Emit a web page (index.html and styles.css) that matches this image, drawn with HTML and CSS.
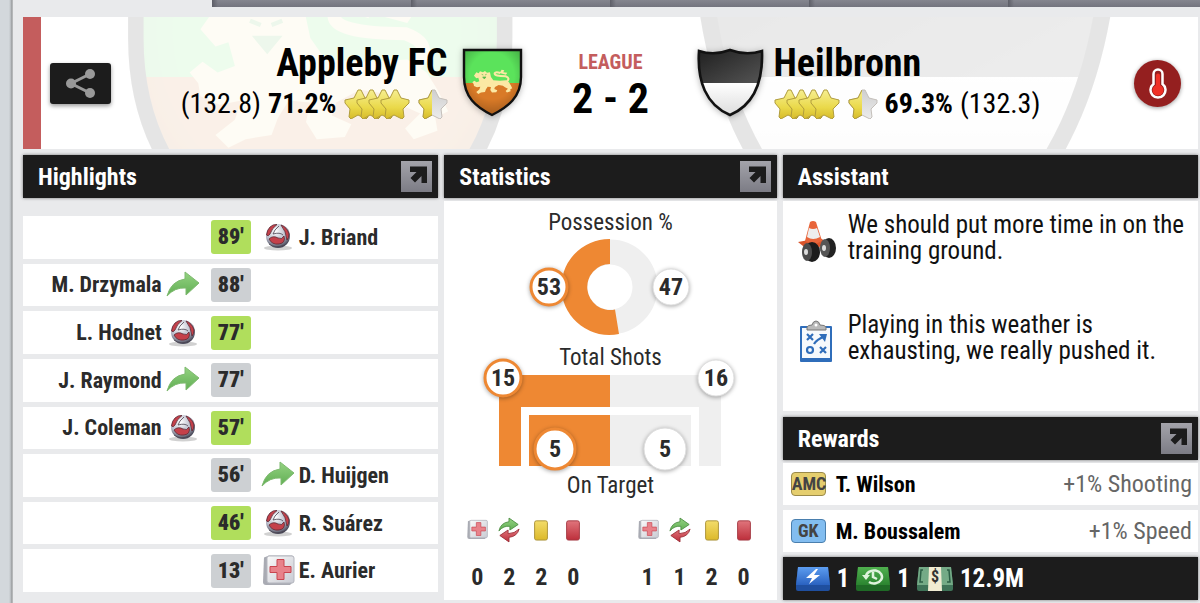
FILE: index.html
```html
<!DOCTYPE html>
<html lang="en">
<head>
  <meta charset="UTF-8">
  <title>Match Report</title>
  <link rel="stylesheet" href="styles.css">
</head>
<body>
  <!-- shared icons -->
  <svg class="defs" width="0" height="0" aria-hidden="true">
    <defs>
      <linearGradient id="g-gold" x1="0" y1="0" x2="0" y2="1"><stop offset="0" stop-color="#f6ee90"/><stop offset=".6" stop-color="#ead94a"/><stop offset="1" stop-color="#d6ba2a"/></linearGradient>
      <linearGradient id="g-silver" x1="0" y1="0" x2="0" y2="1"><stop offset="0" stop-color="#cfcfcf"/><stop offset="1" stop-color="#ececec"/></linearGradient>
      <linearGradient id="g-green" x1="0" y1="0" x2="0" y2="1"><stop offset="0" stop-color="#94d381"/><stop offset="1" stop-color="#60ad53"/></linearGradient>
      <linearGradient id="g-red" x1="0" y1="0" x2="0" y2="1"><stop offset="0" stop-color="#e0757c"/><stop offset="1" stop-color="#bd2f3b"/></linearGradient>
      <linearGradient id="g-yellow" x1="0" y1="0" x2="0" y2="1"><stop offset="0" stop-color="#f3dc6a"/><stop offset="1" stop-color="#dcb92a"/></linearGradient>
      <linearGradient id="g-kit" x1="0" y1="0" x2="1" y2="1"><stop offset="0" stop-color="#fafafa"/><stop offset="1" stop-color="#c9cbd3"/></linearGradient>
      <linearGradient id="g-black" x1="0" y1="0" x2="1" y2="1"><stop offset="0" stop-color="#1c1c1c"/><stop offset="1" stop-color="#555"/></linearGradient>
      <linearGradient id="g-white" x1="0" y1="0" x2="0" y2="1"><stop offset="0" stop-color="#fff"/><stop offset="1" stop-color="#d8d8d8"/></linearGradient>
      <linearGradient id="g-blue" x1="0" y1="0" x2="0" y2="1"><stop offset="0" stop-color="#5c9df0"/><stop offset="1" stop-color="#2a62c0"/></linearGradient>
      <linearGradient id="g-cash" x1="0" y1="0" x2="0" y2="1"><stop offset="0" stop-color="#4fb04e"/><stop offset="1" stop-color="#2b8430"/></linearGradient>
      <radialGradient id="g-shade" cx=".5" cy=".4" r=".65"><stop offset=".5" stop-color="#000" stop-opacity="0"/><stop offset="1" stop-color="#000" stop-opacity=".35"/></radialGradient>
      <radialGradient id="g-ball" cx=".4" cy=".3" r=".7"><stop offset="0" stop-color="#fff"/><stop offset=".6" stop-color="#b9bccb"/><stop offset="1" stop-color="#464656"/></radialGradient>
      <clipPath id="c-home"><path d="M6 3H63V30C63 50 50 60 34 68C18 60 6 50 6 30Z"/></clipPath>
      <clipPath id="c-away"><path d="M3 4Q18 9 34 3Q50 9 66 4C67 34 58 58 34 68C10 58 1 34 3 4Z"/></clipPath>
      <clipPath id="c-left"><rect width="14" height="30"/></clipPath>
    </defs>

    <symbol id="crest-home" viewBox="0 0 68 72">
      <g clip-path="url(#c-home)">
        <rect width="68" height="36" fill="#5be35b"/>
        <rect y="36" width="68" height="36" fill="#d97a27"/>
        <g transform="scale(.333) translate(-9 -18)">
          <path d="M57 104l7-10 7 3 4-6 9 3 6-4 6 5 9-1 3 14 7 10 20 1 18-1 9 6 5 8 5 10-6 3 1 6-11 4-4-5 7-7-9-4-6-5-13-2-11 6-2 6 9 4-3 6-13 1-5-8 2-9-10-1-5 8-3 8-12 2-8 4-6-6 9-7 3-9-10 2-9-4-1-6-4-5 6-5 7 5 8-3-3-11-6 2z" fill="#fbe9a4"/>
          <path d="M154 123Q168 112 152 106Q118 106 119 97Q122 91 136 96" fill="none" stroke="#fbe9a4" stroke-width="6"/>
          <path d="M134 96l6-10 8 2-3 6 12 1-4 6z" fill="#fbe9a4"/>
          <path d="M80 100l5 2M95 100l-5 2M83 108h10l-5 6z" stroke="#58b94c" stroke-width="2" fill="#58b94c"/>
        </g>
        <rect width="68" height="72" fill="url(#g-shade)"/>
      </g>
      <path d="M6 3H63V30C63 50 50 60 34 68C18 60 6 50 6 30Z" fill="none" stroke="#111" stroke-width="2.4"/>
    </symbol>

    <symbol id="crest-away" viewBox="0 0 68 72">
      <g clip-path="url(#c-away)">
        <rect width="68" height="36" fill="url(#g-black)"/>
        <rect y="36" width="68" height="36" fill="url(#g-white)"/>
      </g>
      <path d="M3 4Q18 9 34 3Q50 9 66 4C67 34 58 58 34 68C10 58 1 34 3 4Z" fill="none" stroke="#111" stroke-width="2.6"/>
    </symbol>

    <symbol id="star" viewBox="0 0 30 30">
      <path d="M14 1h3l4 8 8 2v3l-6 6 1 8-2 2-8-4-7 4-2-2 1-8-5-6v-3l9-2z" fill="url(#g-gold)" stroke="#b09c3c" stroke-linejoin="round"/>
    </symbol>
    <symbol id="half-star" viewBox="0 0 30 30">
      <path d="M14 1h3l4 8 8 2v3l-6 6 1 8-2 2-8-4-7 4-2-2 1-8-5-6v-3l9-2z" fill="url(#g-silver)" stroke="#c4bfba" stroke-linejoin="round"/>
      <path clip-path="url(#c-left)" d="M14 1h3l4 8 8 2v3l-6 6 1 8-2 2-8-4-7 4-2-2 1-8-5-6v-3l9-2z" fill="url(#g-gold)" stroke="#b09c3c" stroke-linejoin="round"/>
    </symbol>

    <symbol id="ball" viewBox="0 0 34 34">
      <ellipse cx="17" cy="28" rx="14" ry="2.500" fill="#000" opacity=".18"/>
      <circle cx="17" cy="16" r="12" fill="url(#g-ball)"/>
      <path d="M9 7Q12 4 16 4.500Q11 8 9 14Q7 17 5.500 15Q6 10 9 7zM20 5Q26 7 28 14Q28 18 26 20Q25 11 20 5zM8 19Q12 15 17 18Q21 20 23 16Q25 23 18 24Q11 25 8 19z" fill="#c4404a" stroke="#5a2833" stroke-width=".8"/>
      <path d="M18 6Q13 10 12 14Q19 12 22 15M8 24Q14 29 24 25" fill="none" stroke="#4a4450" stroke-width=".8"/>
    </symbol>

    <symbol id="sub" viewBox="0 0 34 34">
      <path d="M1 28Q5 13 19 11V4L33 15L20 27V20Q9 19 1 28Z" fill="url(#g-green)" stroke="#7fba70"/>
    </symbol>

    <symbol id="medkit" viewBox="0 0 34 34">
      <path d="M3 3.500L8 1.500H31Q33 2 33 4V27L29 31H5Q2 31 2 28Z" fill="#a9abb3"/>
      <rect x="6" y="2" width="27" height="27" rx="2" fill="url(#g-kit)" stroke="#b5b7bf"/>
      <path d="M16 5.500h7v7h7v6h-7v7h-7v-7h-7v-6h7z" fill="#e8828a" stroke="#c9444f"/>
    </symbol>

    <symbol id="swap" viewBox="0 0 24 28">
      <path d="M1 15Q3 6 12 5V1L22 8L13 14V10Q6 9 1 15Z" fill="url(#g-green)" stroke="#4f8f45"/>
      <path d="M23 13Q21 21 12 22V27L2 20L11 14V18Q18 18 23 13Z" fill="url(#g-red)" stroke="#9c3039"/>
    </symbol>

    <symbol id="yellow-card" viewBox="0 0 24 28">
      <rect x="5" y="4" width="14" height="21" rx="2" fill="url(#g-yellow)" stroke="#a98f34"/>
    </symbol>
    <symbol id="red-card" viewBox="0 0 24 28">
      <rect x="5" y="4" width="14" height="21" rx="2" fill="url(#g-red)" stroke="#a33842"/>
    </symbol>

    <symbol id="open" viewBox="0 0 31 31">
      <path d="M9 5.500H26V22H20.500V15L14 21.500L9.500 17L15.500 11H9Z" fill="#1c1c1c"/>
    </symbol>
  </svg>

  <div class="edge"></div>
  <main class="page">
    <div class="tabs"><span></span><span></span><span></span><span></span><span></span></div>

    <header class="match">
      <svg class="ghost ghost-home" viewBox="0 0 68 72"><use href="#crest-home"/></svg>
      <svg class="ghost ghost-away" viewBox="0 0 68 72"><use href="#crest-away"/></svg>

      <div class="side home">
        <div class="bar"></div>
        <button class="share" aria-label="Share">
          <svg width="31" height="29" viewBox="0 0 31 29">
            <path d="M25 5L6 14.500L25 24" fill="none" stroke="#999" stroke-width="3"/>
            <circle cx="25" cy="5" r="5" fill="#999"/><circle cx="6" cy="14.500" r="5" fill="#999"/><circle cx="25" cy="24" r="5" fill="#999"/>
          </svg>
        </button>
        <div class="team">
          <h1>Appleby FC</h1>
          <div class="rating">
            <span>(132.8)</span> <b>71.2%</b>
            <span class="stars">
              <svg><use href="#star"/></svg><svg><use href="#star"/></svg><svg><use href="#star"/></svg><svg><use href="#star"/></svg><svg class="half"><use href="#half-star"/></svg>
            </span>
          </div>
        </div>
        <svg class="crest"><use href="#crest-home"/></svg>
      </div>

      <div class="score">
        <div class="competition">LEAGUE</div>
        <div class="result">2 - 2</div>
      </div>

      <div class="side away">
        <svg class="crest"><use href="#crest-away"/></svg>
        <div class="team">
          <h1>Heilbronn</h1>
          <div class="rating">
            <span class="stars">
              <svg><use href="#star"/></svg><svg><use href="#star"/></svg><svg><use href="#star"/></svg><svg><use href="#star"/></svg><svg class="half"><use href="#half-star"/></svg>
            </span>
            <b>69.3%</b> <span>(132.3)</span>
          </div>
        </div>
        <button class="weather" aria-label="Weather">
          <svg width="18" height="31" viewBox="0 0 18 31">
            <path d="M4.500 6a4.500 4.500 0 0 1 9 0V16a7.500 7.500 0 1 1-9 0Z" fill="#941f1f" stroke="#fff" stroke-width="2.500"/>
            <path d="M7 7.500a2 2 0 0 1 4 0V17a5.500 5.500 0 1 1-4 0Z" fill="#f03127"/>
          </svg>
        </button>
      </div>
    </header>

    <div class="columns">
      <section class="panel">
        <div class="panel-head">
          <h2>Highlights</h2>
          <button class="open" aria-label="Open highlights"><svg><use href="#open"/></svg></button>
        </div>
        <ul class="events">
          <li><span class="ev-home"></span><b class="minute goal">89'</b><span class="ev-away"><svg><use href="#ball"/></svg>J. Briand</span></li>
          <li><span class="ev-home">M. Drzymala<svg><use href="#sub"/></svg></span><b class="minute">88'</b><span class="ev-away"></span></li>
          <li><span class="ev-home">L. Hodnet<svg><use href="#ball"/></svg></span><b class="minute goal">77'</b><span class="ev-away"></span></li>
          <li><span class="ev-home">J. Raymond<svg><use href="#sub"/></svg></span><b class="minute">77'</b><span class="ev-away"></span></li>
          <li><span class="ev-home">J. Coleman<svg><use href="#ball"/></svg></span><b class="minute goal">57'</b><span class="ev-away"></span></li>
          <li><span class="ev-home"></span><b class="minute">56'</b><span class="ev-away"><svg><use href="#sub"/></svg>D. Huijgen</span></li>
          <li><span class="ev-home"></span><b class="minute goal">46'</b><span class="ev-away"><svg><use href="#ball"/></svg>R. Suárez</span></li>
          <li><span class="ev-home"></span><b class="minute">13'</b><span class="ev-away"><svg><use href="#medkit"/></svg>E. Aurier</span></li>
        </ul>
      </section>

      <section class="panel">
        <div class="panel-head">
          <h2>Statistics</h2>
          <button class="open" aria-label="Open statistics"><svg><use href="#open"/></svg></button>
        </div>
        <div class="stats">
          <h3>Possession %</h3>
          <svg class="chart" width="222" height="100" viewBox="0 0 222 100">
            <circle cx="111" cy="51" r="35" fill="none" stroke="#efefef" stroke-width="25"/>
            <path d="M111 3A48 48 0 1 0 120 98L116 73.500A23 23 0 1 1 111 28Z" fill="#ee8833"/>
            <g class="bubble home-bubble"><circle cx="50" cy="51" r="18"/><text x="50" y="59">53</text></g>
            <g class="bubble"><circle cx="172" cy="51" r="18"/><text x="172" y="59">47</text></g>
          </svg>
          <h3>Total Shots</h3>
          <svg class="chart shots" width="222" height="98" viewBox="0 0 222 98">
            <path d="M0 0H111V32H22V91H0ZM30 40H111V91H30Z" fill="#ee8833"/>
            <path d="M111 0H222V91H200V32H111ZM111 40H192V91H111Z" fill="#efefef"/>
            <g class="bubble home-bubble"><circle cx="4" cy="3" r="18"/><text x="4" y="11">15</text></g>
            <g class="bubble"><circle cx="217" cy="3" r="18"/><text x="217" y="11">16</text></g>
            <g class="bubble home-bubble"><circle cx="56" cy="74" r="20"/><text x="56" y="82">5</text></g>
            <g class="bubble"><circle cx="166" cy="74" r="21"/><text x="166" y="82">5</text></g>
          </svg>
          <h3>On Target</h3>
          <div class="counts">
            <ul>
              <li><svg><use href="#medkit"/></svg>0</li>
              <li><svg><use href="#swap"/></svg>2</li>
              <li><svg><use href="#yellow-card"/></svg>2</li>
              <li><svg><use href="#red-card"/></svg>0</li>
            </ul>
            <ul>
              <li><svg><use href="#medkit"/></svg>1</li>
              <li><svg><use href="#swap"/></svg>1</li>
              <li><svg><use href="#yellow-card"/></svg>2</li>
              <li><svg><use href="#red-card"/></svg>0</li>
            </ul>
          </div>
        </div>
      </section>

      <div class="stack">
        <section class="panel assistant">
          <div class="panel-head"><h2>Assistant</h2></div>
          <div class="advice">
            <div class="tip">
              <svg width="38" height="44" viewBox="0 0 38 44">
                <path d="M0 22L22 18L32 24L10 30Z" fill="#d9542b"/>
                <path d="M12 2Q15 0 18 2L24 21Q15 26 7 21Z" fill="#e8653a"/>
                <path d="M11 8Q15 10 19 8L22 17Q15 21 9 17Z" fill="#eee"/>
                <path d="M10 31L33 27" stroke="#999" stroke-width="4"/>
                <ellipse cx="31" cy="28" rx="7" ry="10" fill="#222"/><ellipse cx="27" cy="28" rx="5" ry="9" fill="#555"/><ellipse cx="26" cy="28" rx="2" ry="3" fill="#ddd"/>
                <ellipse cx="14" cy="32" rx="8" ry="10" fill="#1c1c1c"/><ellipse cx="9" cy="32" rx="5" ry="9" fill="#4c4c4c"/><ellipse cx="8" cy="32" rx="2" ry="3" fill="#ddd"/>
              </svg>
              <p>We should put more time in on the training ground.</p>
            </div>
            <div class="tip">
              <svg width="38" height="44" viewBox="0 0 38 44">
                <rect x="2" y="6" width="32" height="36" rx="1" fill="#2f6dba"/>
                <rect x="4" y="8" width="28" height="30" fill="#f6f9fc"/>
                <path d="M9 10V7Q10 5 14 5Q15 1 18 1Q21 1 22 5Q27 5 28 7V10Z" fill="#b9b9b9" stroke="#777"/>
                <circle cx="18" cy="5" r="1.500" fill="#fff"/>
                <path d="M9 14l6 6M15 14l-6 6M22 27l6 6M28 27l-6 6M16 24Q18 20 27 16" stroke="#2f6dba" stroke-width="2.200" fill="none"/>
                <path d="M21 14L29 14L27 22Z" fill="#2f6dba"/>
                <circle cx="12" cy="30" r="3" fill="none" stroke="#2f6dba" stroke-width="2.200"/>
              </svg>
              <p>Playing in this weather is exhausting, we really pushed it.</p>
            </div>
          </div>
        </section>

        <section class="panel">
          <div class="panel-head">
            <h2>Rewards</h2>
            <button class="open" aria-label="Open rewards"><svg><use href="#open"/></svg></button>
          </div>
          <ul class="rewards">
            <li><span class="position amc">AMC</span><b>T. Wilson</b><span class="bonus">+1% Shooting</span></li>
            <li><span class="position gk">GK</span><b>M. Boussalem</b><span class="bonus">+1% Speed</span></li>
          </ul>
          <div class="totals">
            <svg width="36" height="26" viewBox="0 0 36 26">
              <path d="M3 1H33L35 19V23Q35 25 33 25H3Q1 25 1 23V19Z" fill="#1f4f9f"/>
              <path d="M3 1H33L35 19H1Z" fill="url(#g-blue)"/>
              <path d="M21 3L11 12H17L14 18L25 9H19L23 3Z" fill="#fff"/>
            </svg>
            <span>1</span>
            <svg width="36" height="26" viewBox="0 0 36 26">
              <path d="M3 1H33L35 19V23Q35 25 33 25H3Q1 25 1 23V19Z" fill="#1f6a26"/>
              <path d="M3 1H33L35 19H1Z" fill="url(#g-cash)"/>
              <path d="M11 11A8 6.500 0 1 1 14 16M18 6V11L22 13" fill="none" stroke="#dff3dd" stroke-width="2.500"/>
              <path d="M7 9L15 9L11 14Z" fill="#dff3dd"/>
            </svg>
            <span>1</span>
            <svg width="38" height="26" viewBox="0 0 38 26">
              <path d="M3 1H35L37 19V23Q37 25 35 25H3Q1 25 1 23V19Z" fill="#3f7358"/>
              <path d="M3 1H35L37 19H1Z" fill="#74aa86"/>
              <path d="M7 4H5L4 16H7M31 4H33L34 16H31" fill="none" stroke="#2c5f45" stroke-width="1.500"/>
              <path d="M13 1H25L26 25H12Z" fill="#f0ecd2"/>
              <text x="19" y="16" class="dollar">$</text>
            </svg>
            <span>12.9M</span>
          </div>
        </section>
      </div>
    </div>
  </main>
</body>
</html>
```
FILE: styles.css
```css
* {
  box-sizing: border-box;
}

body {
  margin: 0;
  display: flex;
  min-height: 100vh;
  background: #e9eaec;
  font-family: "Roboto Condensed", "Arial Narrow", "Liberation Sans Narrow", "Liberation Sans", sans-serif;
  color: #2b2b2b;
}

h1, h2, h3, p, ul {
  margin: 0;
  padding: 0;
}

ul {
  list-style: none;
}

button {
  padding: 0;
  border: 0;
  display: flex;
  align-items: center;
  justify-content: center;
}

.defs {
  position: absolute;
}

.edge {
  flex: 0 0 13px;
  background: linear-gradient(90deg, #d3d8dc 9px, #b5b9bc 11px, #929496 12px, #d8dadb);
}

.page {
  flex: 1;
  min-width: 0;
  padding: 0 2px 3px 10px;
}

/* bottom of the tab strip */
.tabs {
  display: flex;
  overflow: hidden;
  height: 7px;
  margin: 0 -2px 10px 189px;
}

.tabs span {
  flex: 1 0 199px;
  background: linear-gradient(90deg, #5d5e67, transparent 6px), linear-gradient(#85868f, #73747e);
}

/* match header */
.match {
  position: relative;
  overflow: hidden;
  display: grid;
  grid-template-columns: 1fr 170px 1fr;
  height: 132px;
  margin-bottom: 6px;
  background: #fff;
}

.ghost {
  position: absolute;
  top: -173px;
  width: 440px;
  height: 466px;
  margin-left: -220px;
  opacity: 0.1;
}

.ghost-home { left: 25%; }
.ghost-away { left: 75%; }

.side {
  position: relative;
  display: flex;
  align-items: center;
}

.bar {
  align-self: stretch;
  width: 18px;
  background: #c45d5d;
}

.share {
  width: 61px;
  height: 41px;
  margin: 0 auto 0 9px;
  border-radius: 3px;
  background: #1c1c1c;
  box-shadow: 0 2px 4px rgba(0,0,0,0.4);
}

.team {
  color: #000;
}

.home .team {
  margin-right: 10px;
  text-align: right;
}

.away .team {
  margin: 0 auto 0 10px;
}

.team h1 {
  font-size: 38px;
  line-height: 42px;
}

.rating {
  display: flex;
  align-items: center;
  gap: 7px;
  font-size: 28px;
  line-height: 40px;
}

.home .rating {
  justify-content: flex-end;
}

.stars {
  display: flex;
}

.stars svg {
  width: 30px;
  height: 30px;
  margin-right: -18px;
}

.stars .half {
  margin: 0 0 0 26px;
}

.crest {
  width: 68px;
  height: 72px;
  filter: drop-shadow(0 1px 3px rgba(0,0,0,0.3));
}

.score {
  position: relative;
  display: flex;
  flex-direction: column;
  align-items: center;
  justify-content: center;
  padding-top: 8px;
  font-weight: bold;
}

.competition {
  color: #c45d5d;
  font-size: 20px;
  line-height: 24px;
}

.result {
  color: #000;
  font-size: 42px;
  line-height: 50px;
}

.weather {
  width: 47px;
  height: 47px;
  margin-right: 17px;
  border-radius: 50%;
  background: #941f1f;
  box-shadow: 0 1px 4px rgba(0,0,0,0.4);
}

/* panels */
.columns {
  display: grid;
  grid-template-columns: 5fr 4fr 5fr;
  gap: 6px;
}

.panel {
  display: flex;
  flex-direction: column;
}

.panel-head {
  display: flex;
  align-items: center;
  justify-content: space-between;
  height: 43px;
  padding: 0 6px 0 15px;
  margin-bottom: 3px;
  background: #1c1c1c;
  box-shadow: 0 0 3px rgba(0,0,0,0.5);
}

.panel-head h2 {
  color: #fff;
  font-size: 24px;
  line-height: 28px;
}

.open {
  width: 31px;
  height: 31px;
  background: linear-gradient(#a3a3aa, #7c7c85);
}

.open svg {
  width: 31px;
  height: 31px;
}

.events {
  flex: 1;
  display: grid;
  grid-auto-rows: 1fr;
  gap: 5px;
  padding: 15px 0 8px;
}

.events li {
  display: grid;
  grid-template-columns: 1fr 40px 1fr;
  align-items: center;
  background: #fff;
  font-size: 22px;
  font-weight: bold;
}

.events svg {
  width: 34px;
  height: 34px;
}

.ev-home, .ev-away {
  display: flex;
  align-items: center;
  gap: 4px;
}

.ev-home {
  justify-content: flex-end;
  padding-right: 11px;
}

.ev-away {
  padding-left: 10px;
}

.minute {
  line-height: 34px;
  border-radius: 3px;
  background: #cdd0d3;
  text-align: center;
}

.goal {
  background: #b0de5c;
}

/* statistics */
.stats {
  flex: 1;
  display: flex;
  flex-direction: column;
  align-items: center;
  padding: 9px 17px 10px;
  background: #fff;
}

.stats h3 {
  font-size: 23px;
  font-weight: normal;
  line-height: 26px;
}

.chart {
  overflow: visible;
  margin-bottom: 9px;
}

.shots {
  margin: 4px 0 0;
}

.bubble circle {
  fill: #fff;
  stroke: #ddd;
  filter: drop-shadow(0 1px 2px rgba(0,0,0,0.35));
}

.home-bubble circle {
  stroke: #ee8833;
  stroke-width: 3px;
}

.bubble text {
  font-size: 24px;
  font-weight: bold;
  fill: #2b2b2b;
  text-anchor: middle;
}

.counts {
  display: flex;
  justify-content: space-between;
  width: 100%;
  margin-top: 17px;
}

.counts ul {
  display: flex;
}

.counts li {
  display: flex;
  flex-direction: column;
  align-items: center;
  gap: 20px;
  width: 32px;
  font-size: 24px;
  font-weight: bold;
  line-height: 26px;
}

.counts svg {
  width: 22px;
  height: 28px;
}

/* assistant and rewards */
.stack {
  display: flex;
  flex-direction: column;
  gap: 6px;
}

.assistant {
  flex: 1;
}

.advice {
  flex: 1;
  display: flex;
  flex-direction: column;
  gap: 48px;
  padding: 11px 6px 11px 15px;
  background: #fff;
}

.tip {
  display: flex;
  gap: 12px;
  color: #111;
}

.tip svg {
  flex: none;
  margin-top: 8px;
}

.tip p {
  font-size: 25px;
  line-height: 26px;
}

.rewards {
  display: grid;
  gap: 5px;
}

.rewards li {
  display: flex;
  align-items: center;
  height: 42px;
  padding: 0 6px 0 8px;
  background: #fff;
  color: #000;
  font-size: 22px;
}

.position {
  width: 35px;
  margin-right: 10px;
  border: 1px solid #9a8a4a;
  border-radius: 4px;
  color: #444;
  font-size: 18px;
  font-weight: bold;
  line-height: 22px;
  text-align: center;
}

.amc {
  background: #e5ce6e;
}

.gk {
  border-color: #4a7fae;
  background: #82bdf0;
}

.bonus {
  margin-left: auto;
  color: #666;
  font-size: 24px;
}

.totals {
  display: flex;
  align-items: center;
  gap: 6px;
  height: 43px;
  margin-top: 5px;
  padding: 0 12px;
  background: #1c1c1c;
  box-shadow: 0 0 3px rgba(0,0,0,0.5);
  color: #fff;
  font-size: 25px;
  font-weight: bold;
}

.dollar {
  font-size: 16px;
  font-weight: bold;
  fill: #333;
  text-anchor: middle;
}
```
